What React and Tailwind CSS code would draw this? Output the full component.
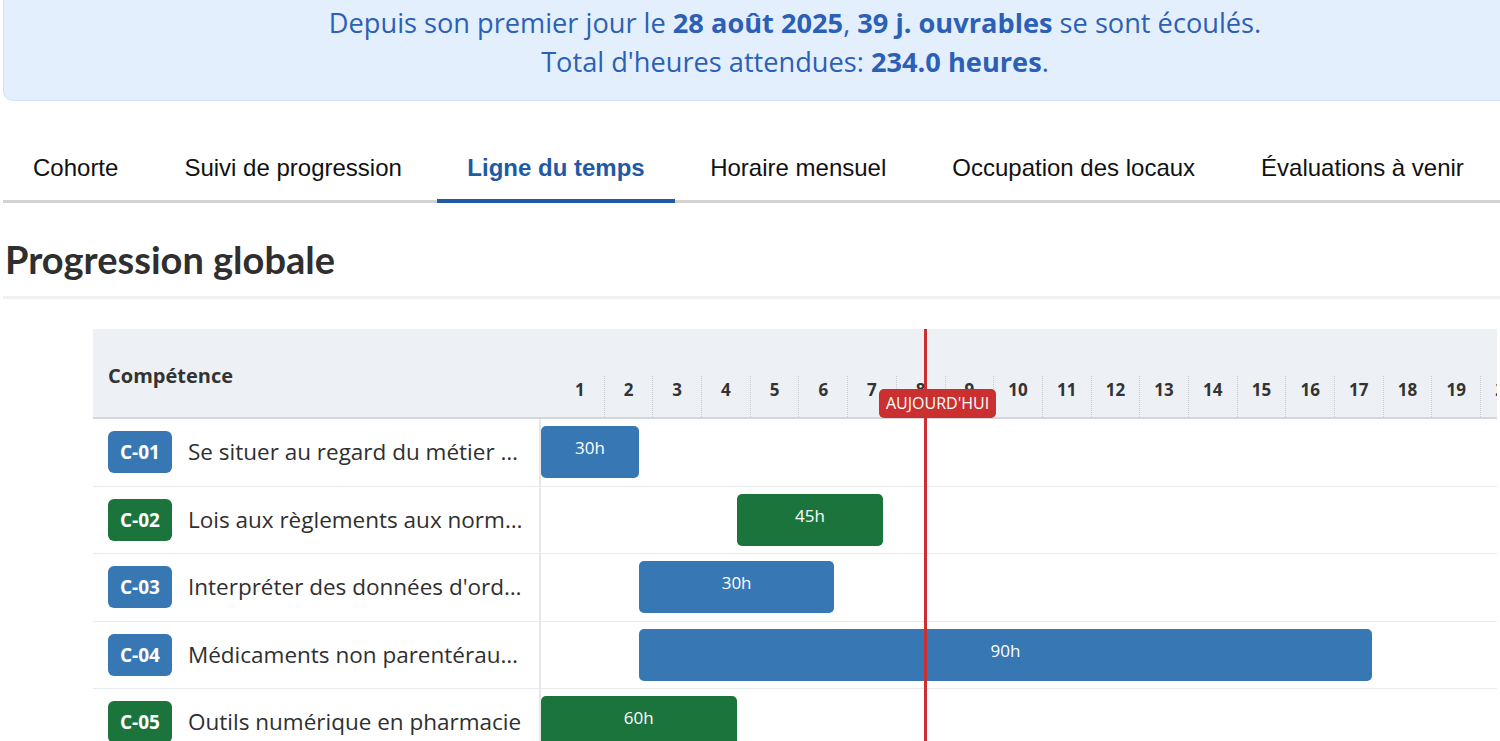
import React from "react";

const tabs = [
  "Cohorte",
  "Suivi de progression",
  "Ligne du temps",
  "Horaire mensuel",
  "Occupation des locaux",
  "Évaluations à venir",
];

const rows = [
  { code: "C-01", name: "Se situer au regard du métier et de la démarche de formation", color: "bg-[#3777b4]", start: 0, span: 2, hours: "30h" },
  { code: "C-02", name: "Lois aux règlements aux normes et aux politiques", color: "bg-[#1c743d]", start: 4, span: 3, hours: "45h" },
  { code: "C-03", name: "Interpréter des données d'ordonnances", color: "bg-[#3777b4]", start: 2, span: 4, hours: "30h" },
  { code: "C-04", name: "Médicaments non parentéraux et produits de santé", color: "bg-[#3777b4]", start: 2, span: 15, hours: "90h" },
  { code: "C-05", name: "Outils numérique en pharmacie", color: "bg-[#1c743d]", start: 0, span: 4, hours: "60h" },
];

const UNIT = 48.9;
const days = Array.from({ length: 24 }, (_, i) => i + 1);

export default function App() {
  return (
    <div className="w-full h-[741px] overflow-hidden bg-white">
      <div className="w-[1600px] pl-[3px]">
        {/* bandeau info */}
        <div className="w-[1584px] h-[101px] bg-[#e3effc] border border-t-0 border-[#cfe2fb] rounded-bl-[10px] pt-[3px] text-center text-[#2c5fb6] text-[27.2px] leading-[39px] font-['Open_Sans',sans-serif]">
          <p>
            Depuis son premier jour le <b>28 août 2025</b>, <b>39 j. ouvrables</b> se sont écoulés.
          </p>
          <p>
            Total d'heures attendues: <b>234.0 heures</b>.
          </p>
        </div>

        {/* onglets */}
        <div className="mt-[33px] flex border-b-[3px] border-[#d3d3d3] font-['Liberation_Sans',Arial,sans-serif] text-[24px] leading-[28px]">
          {tabs.map((t, i) => {
            const active = t === "Ligne du temps";
            return (
              <div
                key={t}
                className={
                  active
                    ? "mx-[2.5px] px-[30px] pt-[20px] pb-[15px] -mb-[3px] border-b-[4px] border-[#2159a5] text-[#2159a5] font-bold"
                    : i === 0
                    ? "pl-[30px] pr-[33px] pt-[20px] pb-[18px] text-[#111]"
                    : "px-[33px] pt-[20px] pb-[18px] text-[#111]"
                }
              >
                {t}
              </div>
            );
          })}
        </div>

        {/* titre */}
        <div className="w-[1497px] border-b-[3px] border-[#eef0f3] pt-[29px] pb-[10px]">
          <h2 className="pl-[2px] text-[38px] leading-[54px] font-bold text-[#2f2f2f] font-['Lato',sans-serif]">
            Progression globale
          </h2>
        </div>

        {/* gantt */}
        <div className="ml-[90px] mt-[30px] w-[1404px] overflow-hidden relative font-['Open_Sans',sans-serif] text-[#333]">
          <div className="flex h-[90px] bg-[#edf1f5] border-b-[2px] border-[#d3d6da]">
            <div className="w-[448px] shrink-0 flex items-center pl-[15px] pt-[6px] text-[20px] font-bold">
              Compétence
            </div>
            <div className="flex flex-col justify-end">
              <div className="flex h-[41px] pl-[15px]">
                {days.map((d) => (
                  <div
                    key={d}
                    className="w-[48.7px] shrink-0 border-r border-dotted border-[#c9cdd2] text-center text-[17px] font-bold pt-[1px]"
                  >
                    {d}
                  </div>
                ))}
              </div>
            </div>
          </div>

          {rows.map((r) => (
            <div key={r.code} className="flex h-[67.5px] border-b border-[#e9ebee]">
              <div className="w-[448px] shrink-0 flex items-center gap-[16px] pl-[15px] pr-[16px] border-r-[2px] border-[#e6e7e9]">
                <span className={`${r.color} shrink-0 h-[42px] px-[12px] rounded-[6px] text-white text-[19px] font-bold flex items-center`}>
                  {r.code}
                </span>
                <span className="truncate text-[22.5px] text-[#2f2f2f]">{r.name}</span>
              </div>
              <div className="relative flex-1">
                <div
                  className={`${r.color} absolute top-[7px] h-[52px] rounded-[5px] text-white text-[17px] text-center pt-[9px]`}
                  style={{ left: r.start * UNIT, width: r.span * UNIT }}
                >
                  {r.hours}
                </div>
              </div>
            </div>
          ))}

          {/* ligne aujourd'hui */}
          <div className="absolute top-0 bottom-0 left-[831px] w-[3px] bg-[#c9302f]" />
          <div className="absolute top-[60px] left-[786px] h-[29px] px-[7px] rounded-[5px] bg-[#c9302f] text-white text-[16px] leading-[29px]">
            AUJOURD'HUI
          </div>
        </div>
      </div>
    </div>
  );
}
